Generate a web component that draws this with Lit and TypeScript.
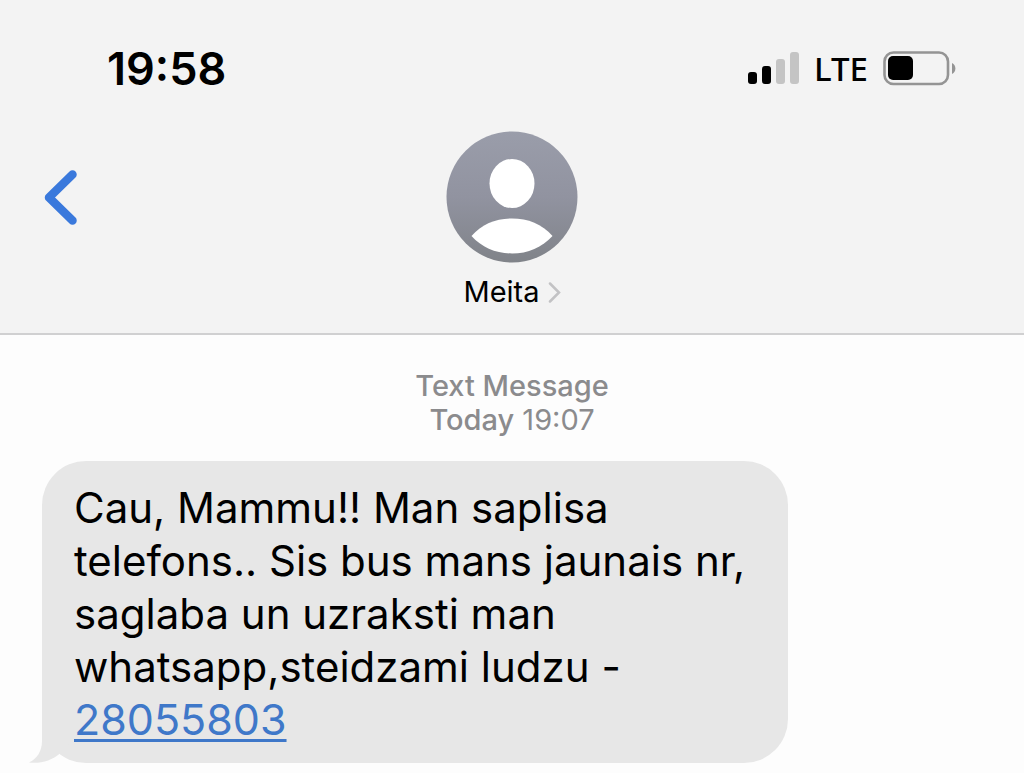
import { LitElement, html, css } from "lit";
import { customElement, property } from "lit/decorators.js";

@customElement("status-bar")
class StatusBar extends LitElement {
  @property() time = "";
  @property() network = "";

  static styles = css`
    :host {
      display: flex;
      align-items: center;
      justify-content: space-between;
      height: 56px;
      padding: 0 68px 0 107px;
      color: #000;
    }
    .time {
      font-size: 45px;
      line-height: 56px;
      font-weight: 600;
    }
    .indicators {
      display: flex;
      align-items: center;
      gap: 15px;
    }
    .network {
      font-family: "Noto Sans", "Open Sans", sans-serif;
      font-size: 33px;
      line-height: 56px;
      font-weight: 500;
    }
    svg {
      display: block;
    }
  `;

  render() {
    return html`
      <span class="time">${this.time}</span>
      <div class="indicators">
        <svg width="51" height="34" viewBox="0 0 51 34" role="img" aria-label="Signal: 2 of 4 bars">
          <rect x="0" y="20" width="9" height="12" rx="3" fill="#000" />
          <rect x="14" y="14" width="9" height="18" rx="3" fill="#000" />
          <rect x="28" y="7" width="9" height="25" rx="3" fill="#c4c4c4" />
          <rect x="42" y="0" width="9" height="32" rx="3" fill="#c4c4c4" />
        </svg>
        <span class="network">${this.network}</span>
        <svg width="73" height="36" viewBox="0 0 73 36" role="img" aria-label="Battery: 40%">
          <rect x="1.5" y="1.5" width="63.5" height="31.5" rx="9" fill="none" stroke="#949494" stroke-width="2.6" />
          <rect x="5" y="5" width="25" height="24" rx="5" fill="#000" />
          <path d="M69 12c4.500 2 4.500 9 0 11z" fill="#949494" />
        </svg>
      </div>
    `;
  }
}

@customElement("contact-nav")
class ContactNav extends LitElement {
  @property() name = "";

  static styles = css`
    :host {
      display: grid;
      grid-template-columns: 1fr auto 1fr;
      align-items: start;
    }
    button {
      margin: 0;
      padding: 0;
      border: 0;
      background: none;
      color: inherit;
      font: inherit;
      cursor: pointer;
    }
    svg {
      display: block;
    }
    .back {
      justify-self: start;
      margin-left: 42px;
      padding: 36px 0;
    }
    .contact {
      display: flex;
      flex-direction: column;
      align-items: center;
      gap: 11px;
    }
    .name {
      display: flex;
      align-items: center;
      gap: 8px;
      font-size: 29px;
      line-height: 36px;
      color: #000;
    }
  `;

  render() {
    return html`
      <button class="back" aria-label="Back">
        <svg width="37" height="60" viewBox="0 0 37 60">
          <path d="M30.5 7.500L7 30.500 30.500 53.500" fill="none" stroke="#3a79dc" stroke-width="8.5" stroke-linecap="round" stroke-linejoin="round" />
        </svg>
      </button>
      <button class="contact">
        <svg width="132" height="132" viewBox="0 0 132 132" aria-hidden="true">
          <defs>
            <linearGradient id="shade" x1="0" y1="0" x2="0" y2="1">
              <stop offset="0" stop-color="#9a9daa" />
              <stop offset="0.5" stop-color="#9193a0" />
              <stop offset="1" stop-color="#808389" />
            </linearGradient>
          </defs>
          <circle cx="66" cy="66" r="65.5" fill="url(#shade)" />
          <ellipse cx="66" cy="52.5" rx="22.5" ry="24.5" fill="#fff" />
          <path d="M25.5 105C36 93 50 87.500 66 87.500S96 93 106.500 105C96 116.500 82 122.500 66 122.500S36 116.500 25.500 105z" fill="#fff" />
        </svg>
        <span class="name">
          ${this.name}
          <svg width="13" height="22" viewBox="0 0 13 22" aria-hidden="true">
            <path d="M2 2.500L11 11.500 2 20.500" fill="none" stroke="#c2c2c4" stroke-width="2.5" stroke-linecap="round" />
          </svg>
        </span>
      </button>
    `;
  }
}

@customElement("message-bubble")
class MessageBubble extends LitElement {
  static styles = css`
    :host {
      display: block;
      position: relative;
      padding: 20px 43px 17px 32px;
      border-radius: 44px;
      background: #e7e7e7;
      color: #000;
      font-size: 42px;
      line-height: 53px;
    }
    .tail {
      position: absolute;
      left: -13px;
      bottom: 0;
      display: block;
    }
    .body {
      position: relative;
      margin: 0;
    }
    ::slotted(a) {
      color: #3f78c9;
      font-size: 43px;
      line-height: 52px;
      text-decoration: underline;
      text-decoration-thickness: 3px;
      text-underline-offset: 4px;
    }
  `;

  render() {
    return html`
      <svg class="tail" width="60" height="60" viewBox="0 0 60 60" aria-hidden="true">
        <path d="M13 14V38C13 48 8 56 0 59.500C11 61 23 57.500 31 50.500L52 30V14z" fill="#e7e7e7" />
      </svg>
      <p class="body"><slot></slot></p>
    `;
  }
}

@customElement("app-root")
class AppRoot extends LitElement {
  static styles = css`
    :host {
      display: flex;
      flex-direction: column;
      min-height: 100vh;
      box-sizing: border-box;
      background: #fdfdfd;
      font-family: Inter, "Liberation Sans", sans-serif;
    }
    header {
      padding: 41px 0 23px;
      border-bottom: 2px solid #d0d0d1;
      background: #f3f3f3;
    }
    contact-nav {
      margin-top: 34px;
    }
    main {
      padding: 34px 42px 10px;
    }
    .stamp {
      margin: 0 0 24px;
      text-align: center;
      color: #8b8b8d;
      font-size: 29px;
      line-height: 34px;
    }
    .strong {
      font-weight: 500;
    }
    .thread {
      display: flex;
      flex-direction: column;
      align-items: flex-start;
    }
  `;

  render() {
    return html`
      <header>
        <status-bar time="19:58" network="LTE"></status-bar>
        <contact-nav name="Meita"></contact-nav>
      </header>
      <main>
        <p class="stamp">
          <span class="strong">Text Message</span><br />
          <span class="strong">Today</span> 19:07
        </p>
        <div class="thread">
          <message-bubble
            >Cau, Mammu!! Man saplisa<br />telefons.. Sis bus mans jaunais nr,<br />saglaba un uzraksti man<br />whatsapp,steidzami ludzu -<br /><a href="tel:28055803">28055803</a></message-bubble
          >
        </div>
      </main>
    `;
  }
}
